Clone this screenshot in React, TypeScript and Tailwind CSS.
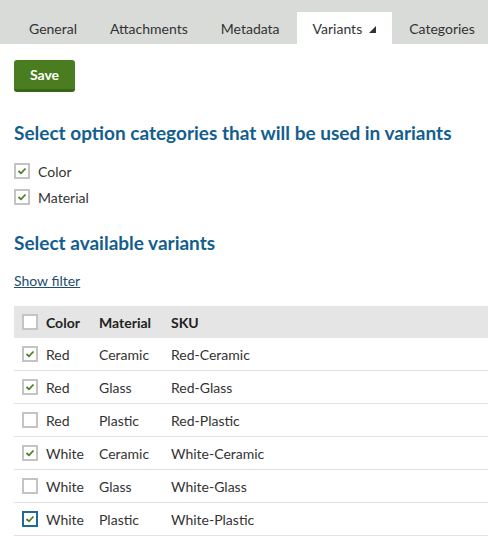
const tabs = ['General', 'Attachments', 'Metadata', 'Variants', 'Categories']

const variants = [
  { color: 'Red', material: 'Ceramic', checked: true },
  { color: 'Red', material: 'Glass', checked: true },
  { color: 'Red', material: 'Plastic', checked: false },
  { color: 'White', material: 'Ceramic', checked: true },
  { color: 'White', material: 'Glass', checked: false },
  { color: 'White', material: 'Plastic', checked: true, focused: true },
]

function Check({ checked, focused }: { checked: boolean; focused?: boolean }) {
  return (
    <div
      className={`w-[16px] h-[16px] bg-white border-2 flex items-center justify-center shrink-0 ${focused ? 'border-[#1d6aa0]' : 'border-[#c4c4c4]'}`}
    >
      {checked && (
        <svg width="10" height="8" viewBox="0 0 10 8">
          <path d="M1.5 4 L4 6.3 L8.5 1.5" fill="none" stroke="#4c7f22" strokeWidth="1.8" />
        </svg>
      )}
    </div>
  )
}

export default function App() {
  return (
    <div className="w-[488px] h-[558px] bg-white text-[#333] text-[14px] overflow-hidden" style={{ fontFamily: 'Lato, sans-serif' }}>
      <div className="h-[44px] bg-[#d9dbd9] flex items-end pl-[13px] gap-[1px]">
        {tabs.map((tab) => (
          <div
            key={tab}
            className={`h-[32px] px-4 flex items-center gap-[7px] ${tab === 'Variants' ? 'bg-white' : ''}`}
          >
            <span>{tab}</span>
            {tab === 'Variants' && (
              <svg width="7" height="7" viewBox="0 0 7 7" className="mt-[2px]">
                <path d="M7 0 L7 7 L0 7 Z" fill="#333" />
              </svg>
            )}
          </div>
        ))}
      </div>

      <div className="px-[14px]">
        <button className="mt-[16px] h-[32px] w-[61px] rounded-[3px] bg-[#4a7d20] border-b-[3px] border-[#3a6418] text-white font-bold text-[14px]">
          Save
        </button>

        <h2 className="mt-[29px] text-[19px] font-bold text-[#135e8e] leading-[24px]">
          Select option categories that will be used in variants
        </h2>
        <div className="mt-[18px] flex flex-col gap-[10px]">
          {['Color', 'Material'].map((c) => (
            <label key={c} className="flex items-center gap-[8px] h-[16px]">
              <Check checked />
              <span>{c}</span>
            </label>
          ))}
        </div>

        <h2 className="mt-[26px] text-[19px] font-bold text-[#135e8e] leading-[24px]">
          Select available variants
        </h2>
        <div className="mt-[15px]">
          <a className="underline text-[#1f4d6f] cursor-pointer">Show filter</a>
        </div>

        <div className="mt-[15px] -mr-[14px]">
          <div className="h-[32px] bg-[#e5e5e5] flex items-center pl-[8px] font-bold text-[#222]">
            <Check checked={false} />
            <div className="w-[61px] pl-[8px]">Color</div>
            <div className="w-[72px]">Material</div>
            <div>SKU</div>
          </div>
          {variants.map((v) => (
            <div key={v.color + v.material} className="h-[33px] border-b border-[#e2e2e2] flex items-center pl-[8px]">
              <Check checked={v.checked} focused={v.focused} />
              <div className="w-[61px] pl-[8px]">{v.color}</div>
              <div className="w-[72px]">{v.material}</div>
              <div>{v.color}-{v.material}</div>
            </div>
          ))}
        </div>
      </div>
    </div>
  )
}
